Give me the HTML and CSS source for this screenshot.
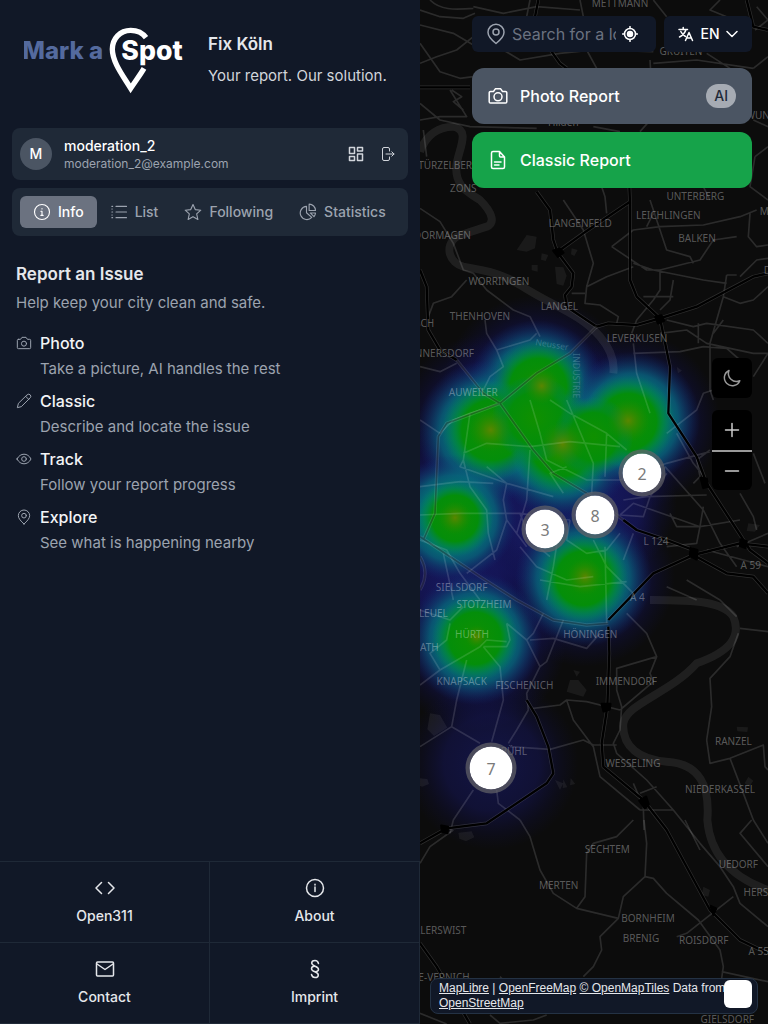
FILE: index.html
```html
<!DOCTYPE html>
<html lang="en">
<head>
<meta charset="utf-8">
<meta name="viewport" content="width=device-width, initial-scale=1">
<title>Fix Köln</title>
<link rel="stylesheet" href="styles.css">
</head>
<body>
<div class="app">
  <aside class="sidebar">
    <header class="brand">
      <svg class="logo" viewBox="72 78 480 204" role="img" aria-label="Mark a Spot">
        <text class="logo-mark" x="67" y="178">Mark a</text>
        <text class="logo-spot" x="364" y="180">Spot</text>
        <path d="M438 113C428 99 411 91 392 91c-32 0-55 25-55 57 0 38 32 79 55 117 13-20 29-41 40-60" fill="none" stroke="#fff" stroke-width="16"/>
      </svg>
      <div class="brand-text">
        <h1>Fix Köln</h1>
        <p>Your report. Our solution.</p>
      </div>
    </header>

    <section class="user card">
      <span class="avatar">M</span>
      <div class="user-text">
        <strong>moderation_2</strong>
        <span>moderation_2@example.com</span>
      </div>
      <button class="icon-btn" aria-label="Dashboard"><svg class="i16" viewBox="0 0 16 16"><path d="M1.5 1.5h5v6h-5zM9.500 1.500h5v3.500h-5zM9.500 8h5v6.500h-5zM1.500 10.500h5v4h-5z"/></svg></button>
      <button class="icon-btn thin" aria-label="Log out"><svg class="i16" viewBox="0 0 16 16"><path d="M9.500 5V3a1.500 1.500 0 0 0-1.500-1.500H4A1.500 1.500 0 0 0 2.500 3v10A1.500 1.500 0 0 0 4 14.500h4A1.500 1.500 0 0 0 9.500 13v-2M6 8h8M11.800 5.800 14 8l-2.200 2.200"/></svg></button>
    </section>

    <nav class="tabs card" aria-label="Sections">
      <button class="tab active"><svg class="i18" viewBox="0 0 24 24"><circle cx="12" cy="12" r="10"/><path d="M10.500 11h1.500v5.500M10.500 16.500h3M12 7.300v.6"/></svg>Info</button>
      <button class="tab"><svg class="i18" viewBox="0 0 24 24"><path d="M8 4.500h14M8 12h14M8 19.500h14M2.500 4.500h1M2.500 12h1M2.500 19.500h1M2.500 8h.5M2.500 16h.5"/></svg>List</button>
      <button class="tab"><svg class="i18" viewBox="0 0 24 24"><path d="m12 2 3 6.800 7.400.8-5.500 5 1.600 7.400-6.500-3.800L5.500 22l1.600-7.400-5.500-5L9 8.800z"/></svg>Following</button>
      <button class="tab"><svg class="i18" viewBox="0 0 24 24"><path d="M10 4.500a8.800 8.800 0 1 0 7 14.700l-7-6.200zM13.500 1.500v8.500H22a8.500 8.500 0 0 0-8.500-8.500zM15 13.300h7a9 9 0 0 1-2 5z"/></svg>Statistics</button>
    </nav>

    <main class="intro">
      <h2>Report an Issue</h2>
      <p>Help keep your city clean and safe.</p>
      <dl class="steps">
        <div class="step"><svg class="i16" viewBox="0 0 24 24"><path d="M3.500 6.500h3.300L9 3.500h6l2.200 3h3.300a1.500 1.500 0 0 1 1.500 1.500v11a1.500 1.500 0 0 1-1.500 1.500h-17A1.500 1.500 0 0 1 2 19V8a1.500 1.500 0 0 1 1.500-1.500z"/><circle cx="12" cy="13" r="3.800"/></svg><dt>Photo</dt><dd>Take a picture, AI handles the rest</dd></div>
        <div class="step"><svg class="i16" viewBox="0 0 24 24"><path d="M17 2.500a3.200 3.200 0 0 1 4.500 4.500L8 20.500 2 22l1.500-6zM14.500 5 19 9.500"/></svg><dt>Classic</dt><dd>Describe and locate the issue</dd></div>
        <div class="step"><svg class="i16" viewBox="0 0 24 24"><path d="M1.500 12C4 7 8 4.800 12 4.800S20 7 22.500 12C20 17 16 19.200 12 19.200S4 17 1.500 12z"/><circle cx="12" cy="12" r="3.500"/></svg><dt>Track</dt><dd>Follow your report progress</dd></div>
        <div class="step"><svg class="i16" viewBox="0 0 24 24"><path d="M12 22.500C7 18 3.500 14 3.500 10a8.500 8.500 0 0 1 17 0c0 4-3.500 8-8.500 12.500z"/><circle cx="12" cy="10" r="3.500"/></svg><dt>Explore</dt><dd>See what is happening nearby</dd></div>
      </dl>
    </main>

    <nav class="links" aria-label="More">
      <a href="#open311"><svg class="i20" viewBox="0 0 20 20"><path d="M6.500 4.500 1 10l5.500 5.500M13.500 4.500 19 10l-5.500 5.500"/></svg>Open311</a>
      <a href="#about"><svg class="i20" viewBox="0 0 20 20"><circle cx="10" cy="10" r="8.500"/><path d="M10 9v4.500M10 6.300v.6"/></svg>About</a>
      <a href="#contact"><svg class="i20" viewBox="0 0 20 20"><rect x="1.500" y="3" width="17" height="14" rx="1"/><path d="m2 5 8 5.500L18 5"/></svg>Contact</a>
      <a href="#imprint"><svg class="i20" viewBox="0 0 20 20"><path d="M13.500 4.500C13 2.500 11.800 1.500 10 1.500c-2 0-3.300 1-3.300 2.600C6.700 7.500 13.500 7 13.500 10.300c0 1.600-1.500 2.400-3.300 2.400M6.500 15.500c.5 2 1.700 3 3.500 3 2 0 3.300-1 3.300-2.600C13.300 12.500 6.500 13 6.500 9.700c0-1.600 1.500-2.400 3.300-2.400"/></svg>Imprint</a>
    </nav>
  </aside>

  <section class="map" aria-label="Map">
    <svg class="map-canvas" viewBox="0 0 1044 3072" preserveAspectRatio="xMidYMid slice">
      <defs>
        <radialGradient id="blue"><stop offset="0" stop-color="#16195e"/><stop offset=".55" stop-color="#15165a" stop-opacity=".75"/><stop offset=".8" stop-color="#111150" stop-opacity=".3"/><stop offset="1" stop-color="#101048" stop-opacity="0"/></radialGradient>
        <radialGradient id="teal"><stop offset=".45" stop-color="#007c72"/><stop offset=".68" stop-color="#066a7c" stop-opacity=".75"/><stop offset=".85" stop-color="#0d4a76" stop-opacity=".35"/><stop offset="1" stop-color="#102a70" stop-opacity="0"/></radialGradient>
        <radialGradient id="green"><stop offset="0" stop-color="#109000"/><stop offset=".6" stop-color="#048e0a"/><stop offset="1" stop-color="#008060" stop-opacity="0"/></radialGradient>
        <radialGradient id="olive"><stop offset="0" stop-color="#5a8600"/><stop offset="1" stop-color="#208c00" stop-opacity="0"/></radialGradient>
      </defs>

      <g class="heat">
        <g fill="url(#blue)">
          <circle cx="350" cy="1170" r="285"/><circle cx="210" cy="1290" r="290"/><circle cx="425" cy="1330" r="300"/><circle cx="630" cy="1265" r="270"/><circle cx="100" cy="1555" r="290"/><circle cx="495" cy="1730" r="270"/><circle cx="170" cy="1920" r="270"/><circle cx="330" cy="1590" r="260"/><circle cx="540" cy="1510" r="230"/><circle cx="120" cy="1760" r="220"/>
          <circle cx="215" cy="2290" r="260" opacity=".7"/>
        </g>
        <g fill="url(#teal)">
          <circle cx="350" cy="1165" r="205"/><circle cx="205" cy="1295" r="215"/><circle cx="425" cy="1345" r="215"/><circle cx="635" cy="1260" r="205"/><circle cx="100" cy="1555" r="190"/><circle cx="490" cy="1735" r="205"/><circle cx="165" cy="1915" r="200"/>
        </g>
        <g fill="url(#green)">
          <circle cx="355" cy="1160" r="140"/><circle cx="215" cy="1290" r="150"/><circle cx="425" cy="1335" r="155"/><circle cx="345" cy="1255" r="130"/><circle cx="625" cy="1265" r="140"/><circle cx="520" cy="1310" r="120"/><circle cx="105" cy="1555" r="115"/><circle cx="490" cy="1735" r="135"/><circle cx="165" cy="1915" r="130"/>
        </g>
        <g fill="url(#olive)">
          <circle cx="365" cy="1158" r="55"/><circle cx="212" cy="1290" r="65"/><circle cx="428" cy="1333" r="70"/><circle cx="625" cy="1262" r="65"/><circle cx="105" cy="1553" r="50"/><circle cx="495" cy="1730" r="55"/><circle cx="170" cy="1910" r="35"/>
        </g>
      </g>

      <g class="water">
        <path d="M0 455C20 400 60 380 100 380C150 390 120 440 110 490C100 560 150 580 180 600C220 640 225 670 200 680C170 690 150 695 110 710C70 740 90 790 130 800C220 815 250 825 300 855C400 920 480 940 540 1010C570 1045 585 1080 580 1120M690 1800C830 1800 910 1805 940 1850C965 1910 930 1955 830 1990C750 2080 620 2110 610 2170C605 2240 660 2280 740 2285C840 2290 870 2360 862 2460C870 2560 930 2630 1044 2670"/>
      </g>
      <g class="patch">
        <path d="M320 705l30 5-5 35-25 10-30-5zM365 760l20 5-8 18-14-4zM405 800l25 2 10 25-10 30-20-5zM335 795l18 0 0 20-18-4zM455 745l18 5-10 18-10-5zM30 2140l30 5 22 38-40 25-20-20zM450 2040l25 0 25 30-10 20-50-15zM460 2010l20 5-10 15zM115 2498l40-4 8 18-25 12-20-8zM405 2340l25 10-10 20zM430 2338l12 24-14 2zM452 2334l14 18-16 4zM0 2335l22 2 5 15-20 8-7-2zM950 2180l34 2-2 14-30-2zM985 1570l35 5-15 20-25-2zM850 2660l20 10-5 20-20-5zM985 2330l15 12-12 18-14-10zM770 1100l16 12-12 8z"/>
      </g>

      <g class="roads">
        <path d="M0 30L60 50L130 55L165 40M0 75L100 100L160 135M30 0C60 30 100 30 160 25M0 190L50 170L110 150L160 110M0 130L60 215L120 235L160 230M90 270L140 350L60 350L0 360M0 310L60 360L150 380L350 385M95 270L125 290L100 305L130 330M10 390L20 470M250 150L300 180L420 160L520 150L700 155M160 20L250 40L350 20L480 30M480 0L490 50M500 150L530 205M860 160L930 205M700 190L830 180L1000 205M660 395L700 350L690 180M520 380L600 395M1000 205L1044 170M1000 360L1044 380M1005 470L1044 440M1005 470L990 560L1044 600M850 560L870 600M330 0L320 50M700 0L740 50M900 0L870 30L920 50M1010 20L1044 60L1005 90"/>
        <path d="M0 625L60 665L100 730L130 810L160 820L200 870L280 930L330 950L360 1010M140 840L95 890L40 910L25 950M195 960L200 1000L230 1050L250 1100L210 1130L190 1170M230 1050L330 1020L350 1000M430 600L490 690L520 790L500 860L495 910L540 915L595 950L590 970M545 560L555 590L560 640M455 880H495M500 860L560 830L640 800M575 740L640 690L720 680L850 675L960 650L1010 630M640 790L700 810L850 840L920 850M575 740L680 810L720 810L840 780L880 720L950 710M690 600L720 690L740 750L810 770L820 790M720 810L720 870L700 900L650 960L635 1000M760 840L750 900L720 930M920 825L910 890L960 910L1000 900L1044 860M960 830L1010 780L1044 775M950 825L920 825M670 890H760M740 960L820 980L860 970L1000 990L1044 1030M720 1000L800 990L860 1030L1000 1060L1044 1060M835 970V1030M870 1030L870 1170L880 1200M880 1000L910 960M640 1030L650 1120L690 1240M640 1060L780 1055L850 1040L920 1045L960 1080M1000 1130L1044 1060M990 640L985 710L1010 740L1044 735M910 890L870 1030M700 640L680 680"/>
        <path d="M0 1100L60 1115L110 1090M60 1300L100 1260L150 1240L240 1210M150 1240L130 1380L120 1400L260 1450L400 1490M0 1260L60 1300M130 1360L200 1330L330 1340L450 1325L600 1340M200 1400L260 1450L250 1500L260 1560L320 1640M130 1380L150 1460L200 1530L205 1600L225 1680M0 1460L120 1445L220 1450M0 1545L120 1540L300 1540L450 1560M260 1560L230 1650L140 1720M300 1540L330 1620L390 1670M330 1200L360 1300L380 1380L500 1440L600 1440M390 1200L450 1240L560 1300L620 1350M440 1200L520 1390L515 1480M560 1300L555 1430M330 1350L320 1500L290 1600M430 1480L390 1420L440 1400M600 1440L740 1390L870 1355M610 1500L680 1490L860 1485M735 1400L850 1530L900 1630L950 1700M740 1420L690 1490L670 1550L600 1545M600 1545L640 1510L740 1545L840 1580L960 1560M750 1540L770 1580L840 1580L830 1630L740 1640M640 1600L610 1680M840 1580L850 1520M1000 1360L1035 1450M820 1450L840 1430L830 1380L870 1350M960 1480L1000 1550L1010 1590M770 1300L820 1390L860 1440M740 1300L830 1230L850 1180L880 1170M950 1640L1044 1600M740 1760L830 1800M800 1740L850 1770L900 1800L950 1850M860 1650L1044 1700M0 1620L80 1650L120 1720L180 1800M300 1640L350 1700L440 1740L520 1730M520 1620L560 1700L640 1780M450 1560L440 1620L500 1660L560 1650L600 1600M425 1540L400 1700L380 1800M70 1660L100 1800M555 1640L560 1870M360 1740L480 1760L620 1745"/>
        <path d="M0 1830L90 1860L130 1820M260 1870L320 1920L360 2000L380 1985L430 1860M90 1870L80 1920L30 1960L60 2010L180 1940L200 1920L260 1925M260 1870L270 1920L260 1940L190 1940M0 2055L60 2010M190 1940L240 2000L250 2100L215 2225M140 1980L110 2100L95 2180L0 2240M95 2180L180 2230M330 1920L400 1915L500 1945L540 1900M370 1840L340 1900L320 1920M360 2000L320 2080L325 2130L290 2190L265 2230M340 2125L420 2115L440 2100L500 2105L600 2130M440 2100L460 2160L520 2240L540 2330L660 2430M620 1840L680 1900L710 1970L690 2020L700 2045L600 2130M710 1970L590 2005L590 2070L605 2120L600 2190L580 2230L590 2260L680 2340L760 2430M270 2240L390 2248L490 2220L520 2235L590 2235M160 2370L100 2460L90 2500M230 2370L235 2410L300 2460M960 1885L1044 1895M955 1900L930 1970L870 2035L875 2120L860 2220L870 2290L930 2275L1030 2235L1035 2300L1044 2310M930 2275L970 2380L1000 2460M660 2380L710 2360M660 2430H760L840 2530L900 2600L940 2660L960 2710L1044 2780M640 2350L670 2420L672 2490"/>
        <path d="M300 2460L330 2510L360 2610L400 2680L470 2725L595 2755M640 2460L590 2510L520 2530L500 2560L495 2690L470 2725M672 2460L680 2530L675 2630L610 2690L595 2755L540 2810L545 2850L520 2900L490 2930M675 2630L700 2635L740 2680L835 2760L900 2850L910 2900L905 2935M770 2810L800 2800L940 2690M905 2915L1044 2945M795 2460L840 2550M995 2460L960 2500L1044 2600M1000 2460L1044 2530M0 2590L30 2540L100 2490M240 2930L250 2940M210 3045L240 3070L340 3060L380 3045M0 3040L80 3072"/>
      </g>

      <g class="highway-edge">
        <path d="M355 0L345 50L370 120L420 190L440 205M980 0L1000 80L1044 90M0 262L150 262M350 575L390 630L400 720L412 756L460 820L455 860L435 885L440 920L530 980L565 970L650 975L720 955L830 920L1000 830L1044 820M412 756L490 700L630 605L628 560M630 605V840L650 890L720 955L750 1100L745 1240L830 1370L860 1450L990 1650L1044 1690M0 810L20 860L25 990L60 1050L110 1080M610 1560L650 1590L740 1620L820 1650M565 1860L700 1720L820 1665L960 1630L1044 1640M820 1665L920 1720L1000 1730L1044 1780M565 1880L568 1960L562 2120L545 2230L550 2300L670 2400L740 2490L870 2730L960 2820L1044 2860M320 2100L350 2150L385 2240L400 2320L380 2350L260 2430L200 2470L80 2485L0 2530M0 2830L50 2900L150 3072"/>
      </g>
      <g class="highway">
        <path d="M355 0L345 50L370 120L420 190L440 205M980 0L1000 80L1044 90M0 262L150 262M350 575L390 630L400 720L412 756L460 820L455 860L435 885L440 920L530 980L565 970L650 975L720 955L830 920L1000 830L1044 820M412 756L490 700L630 605L628 560M630 605V840L650 890L720 955L750 1100L745 1240L830 1370L860 1450L990 1650L1044 1690M0 810L20 860L25 990L60 1050L110 1080M610 1560L650 1590L740 1620L820 1650M565 1860L700 1720L820 1665L960 1630L1044 1640M820 1665L920 1720L1000 1730L1044 1780M565 1880L568 1960L562 2120L545 2230L550 2300L670 2400L740 2490L870 2730L960 2820L1044 2860M320 2100L350 2150L385 2240L400 2320L380 2350L260 2430L200 2470L80 2485L0 2530M0 2830L50 2900L150 3072"/>
        <path class="junction" d="M400 752l20-6 10 12-16 12zM706 950l18-4 8 16-18 8zM812 1644l20 6-2 28-20-10zM962 1618l18 6-4 20-16-6zM545 2112h26l-2 16-18 6zM658 2402l20-12 8 24-12 10zM64 2477l20 4-2 18-16-4zM872 2718l16 8-8 18zM842 1434l18 2 4 24-14 4z"/>
      </g>
      <g class="motorway-faint">
        <path class="casing" d="M530 980L450 1060L350 1120L240 1210L80 1270L55 1310L45 1540L10 1620M110 1080L190 1180L240 1210L340 1350L400 1420L500 1480L610 1560M0 1610L60 1650L180 1730L290 1800L400 1860L500 1875L565 1870M0 1670Q30 1720 0 1770"/>
        <path class="core" d="M530 980L450 1060L350 1120L240 1210L80 1270L55 1310L45 1540L10 1620M110 1080L190 1180L240 1210L340 1350L400 1420L500 1480L610 1560M0 1610L60 1650L180 1730L290 1800L400 1860L500 1875L565 1870M0 1670Q30 1720 0 1770"/>
      </g>

      <g class="labels">
        <text x="600" y="21">METTMANN</text><text x="783" y="165">GRUITEN</text><text x="430" y="377">Hilden</text><text x="78" y="506">STÜRZELBERG</text><text x="130" y="575">ZONS</text><text x="826" y="600">UNTERBERG</text><text x="1044" y="357">WUNGEN</text>
        <text x="745" y="656">LEICHLINGEN</text><text x="481" y="680">LANGENFELD</text><text x="831" y="725">BALKEN</text><text x="67" y="716">DORMAGEN</text><text x="1033" y="645">M</text><text x="1042" y="822">D</text><text x="237" y="854">WORRINGEN</text><text x="418" y="930">LANGEL</text><text x="180" y="960">THENHOVEN</text><text x="14" y="980">SCH</text><text x="651" y="1025">LEVERKUSEN</text><text x="68" y="1070">INNERSDORF</text><text x="160" y="1187">AUWEILER</text>
        <text class="street" transform="translate(345 1035) rotate(9)">Neusser</text><text class="street" transform="translate(458 1060) rotate(90)">INDUSTRIE</text>
        <text x="708" y="1634">L 124</text><text x="992" y="1706">A 59</text><text x="125" y="1774">SIELSDORF</text><text x="652" y="1802">A 4</text><text x="192" y="1824">STOTZHEIM</text><text x="40" y="1850">LEUEL</text><text x="156" y="1915">HÜRTH</text><text x="28" y="1952">ATH</text><text x="511" y="1915">HÖNINGEN</text><text x="125" y="2056">KNAPSACK</text><text x="313" y="2068">FISCHENICH</text><text x="619" y="2056">IMMENDORF</text><text x="272" y="2266">BRÜHL</text>
        <text x="940" y="2235">RANZEL</text><text x="639" y="2300">WESSELING</text><text x="900" y="2378">NIEDERKASSEL</text><text x="562" y="2560">SECHTEM</text><text x="955" y="2604">UEDORF</text><text x="416" y="2666">MERTEN</text><text x="1024" y="2688">HERSEL</text><text x="684" y="2766">BORNHEIM</text><text x="663" y="2827">BRENIG</text><text x="851" y="2833">ROISDORF</text><text x="1025" y="2866">A 555</text><text x="62" y="2803">LLERSWIST</text><text x="72" y="2942">E-VERNICH</text><text x="922" y="3070">GIELSDORF</text>
      </g>
    </svg>

    <button class="cluster c2">2</button>
    <button class="cluster c8">8</button>
    <button class="cluster c3">3</button>
    <button class="cluster big c7">7</button>

    <div class="actions">
      <div class="search-row">
        <div class="search">
          <svg class="i24" viewBox="0 0 24 24"><path d="M12 21.500C7.500 18 4 14 4 10.300a8 8 0 0 1 16 0C20 14 16.500 18 12 21.500z"/><circle cx="12" cy="10" r="3"/></svg>
          <input type="text" placeholder="Search for a location" aria-label="Search for a location">
          <button class="locate" aria-label="Use my location"><svg class="i16" viewBox="0 0 16 16"><circle cx="8" cy="8" r="5.500"/><circle cx="8" cy="8" r="2.500" fill="currentColor"/><path d="M8 .5v2M8 13.500v2M.5 8h2M13.500 8h2"/></svg></button>
        </div>
        <button class="lang"><svg class="i16" viewBox="0 0 16 16"><path d="M1 3.500h8.500M5.200 1.500v2M8 3.500C7 7 4.500 9.500 1.500 11M2.800 5.500c1 2 2.700 4 4.700 5M7.500 14.500 11 6.500l3.500 8M8.700 12h4.600"/></svg>EN<svg class="i12" viewBox="0 0 12 12"><path d="m1 3.500 5 5 5-5"/></svg></button>
      </div>
      <button class="action photo"><svg class="i20" viewBox="0 0 20 20"><path d="M2.500 5.500h3l1.800-2.700h5.400l1.800 2.700h3A1.300 1.300 0 0 1 18.800 6.800v9a1.300 1.300 0 0 1-1.300 1.300h-15a1.300 1.300 0 0 1-1.300-1.300v-9A1.300 1.300 0 0 1 2.500 5.500z"/><circle cx="10" cy="10.800" r="4"/></svg>Photo Report<span class="badge">AI</span></button>
      <button class="action classic"><svg class="i20" viewBox="0 0 20 20"><path d="M11.500 1.500H5A1.500 1.500 0 0 0 3.500 3v14A1.500 1.500 0 0 0 5 18.500h10a1.500 1.500 0 0 0 1.500-1.500V7zM11.500 1.500V6a1 1 0 0 0 1 1h4M6.500 12H13M6.500 15h4.500"/></svg>Classic Report</button>
    </div>

    <div class="controls">
      <button class="theme" aria-label="Dark mode"><svg class="i20" viewBox="0 0 20 20"><path d="M7 2.500a8 8 0 1 0 10.800 10.200A8 8 0 0 1 7 2.500z"/></svg></button>
      <div class="zoom">
        <button aria-label="Zoom in"><svg class="i20" viewBox="0 0 20 20"><path d="M10 3.500v13M3.500 10h13"/></svg></button>
        <button aria-label="Zoom out"><svg class="i20" viewBox="0 0 20 20"><path d="M3.500 10h13"/></svg></button>
      </div>
    </div>

    <div class="attribution"><a href="#maplibre">MapLibre</a> | <a href="#openfreemap">OpenFreeMap</a> <a href="#openmaptiles">© OpenMapTiles</a> Data from <a href="#osm">OpenStreetMap</a></div>
    <button class="attribution-toggle" aria-label="Toggle attribution"></button>
  </section>
</div>
</body>
</html>
```
FILE: styles.css
```css
* { box-sizing: border-box; }
body { margin: 0; font-family: Inter, sans-serif; font-size: 15px; line-height: 24px; color: #e5e7eb; background: #0c0c0c; }
h1, h2, p, dl, dd { margin: 0; }
button, input { font: inherit; color: inherit; border: 0; background: none; padding: 0; }
button { cursor: pointer; }
a { color: inherit; }

svg { flex: none; }
.i12, .i16, .i18, .i20, .i24 { fill: none; stroke: currentColor; stroke-width: 1.500; stroke-linecap: round; stroke-linejoin: round; }
.i12 { width: 12px; height: 12px; }
.i16 { width: 16px; height: 16px; }
.i18 { width: 18px; height: 18px; }
.i20 { width: 20px; height: 20px; }
.i24 { width: 24px; height: 24px; }

.app { display: grid; grid-template-columns: minmax(320px, 420px) minmax(0, 1fr); min-height: 100vh; }

.sidebar { display: flex; flex-direction: column; background: #111827; }
.brand { display: flex; align-items: center; gap: 24px; padding: 16px 16px 16px 24px; min-height: 120px; }
.logo { width: 160px; height: 68px; flex: none; }
.logo text { font-family: Inter, sans-serif; font-weight: 800; }
.logo-mark { fill: #546a9e; font-size: 72px; }
.logo-spot { fill: #fff; font-size: 80px; }
.brand-text { display: grid; gap: 8px; }
.brand h1, .intro h2 { font-size: 17px; line-height: 24px; font-weight: 600; }
.brand p { color: #d1d5db; }

.card { margin: 8px 12px 0; padding: 8px; border-radius: 8px; background: #1f2937; }
.user { display: flex; align-items: center; gap: 16px; padding-right: 12px; }
.avatar { display: grid; place-items: center; width: 32px; height: 32px; border-radius: 50%; background: #4b5563; color: #fff; font-size: 14px; font-weight: 500; }
.user-text { display: grid; flex: 1; margin-left: -4px; }
.user-text strong { font-size: 14px; line-height: 20px; font-weight: 500; color: #fff; }
.user-text span { font-size: 12px; line-height: 16px; color: #9ca3af; }
.icon-btn { display: flex; color: #d1d5db; }
.icon-btn.thin svg { stroke-width: 1; }

.tabs { display: flex; }
.tab { display: flex; align-items: center; gap: 7px; height: 32px; padding: 0 13px; border-radius: 6px; font-size: 14px; font-weight: 500; color: #9ca3af; }
.tab.active { background: #6b7280; color: #fff; }

.intro { flex: 1; padding: 26px 16px; }
.intro h2 { margin-bottom: 5px; }
.intro > p { color: #9ca3af; margin-bottom: 15px; }
.steps { display: grid; gap: 6px; }
.step { display: grid; grid-template-columns: 16px 1fr; column-gap: 8px; align-items: center; line-height: 26px; color: #9ca3af; }
.step dt { font-size: 16px; font-weight: 500; color: #f3f4f6; }
.step dd { grid-column: 2; }

.links { display: grid; grid-template-columns: 1fr 1fr; border-bottom: 1px solid #1f2937; }
.links a { display: flex; flex-direction: column; align-items: center; gap: 8px; padding: 16px 0; border-top: 1px solid #1f2937; border-right: 1px solid #1f2937; font-size: 14px; line-height: 20px; font-weight: 500; text-decoration: none; }

.map { position: relative; overflow: hidden; background: #0c0c0c; }
.map-canvas { position: absolute; inset: 0; width: 100%; height: 100%; }
.water path { fill: none; stroke: #fff; stroke-opacity: .08; stroke-width: 24; }
.patch { fill: #fff; fill-opacity: .06; }
.roads path { fill: none; stroke: #fff; stroke-opacity: .13; stroke-width: 5; stroke-linejoin: round; }
.highway-edge path { fill: none; stroke: #fff; stroke-width: 11; stroke-opacity: .14; stroke-linejoin: round; }
.highway path { fill: none; stroke: #000; stroke-width: 7; stroke-linejoin: round; }
.highway .junction { fill: #000; }
.motorway-faint path { fill: none; stroke-linejoin: round; }
.motorway-faint .casing { stroke: #fff; stroke-opacity: .12; stroke-width: 10; }
.motorway-faint .core { stroke: #000; stroke-opacity: .3; stroke-width: 5; }
.labels text { font-family: "Noto Sans", sans-serif; font-size: 30px; fill: #fff; fill-opacity: .33; text-anchor: middle; }
.labels .street { font-size: 26px; text-anchor: start; fill: #7ab; fill-opacity: .4; }

.cluster { position: absolute; width: 47px; height: 47px; border: 4px solid rgba(100, 100, 104, .7); border-radius: 50%; background: #fff; background-clip: padding-box; color: #7a7a7a; font-family: "Noto Sans", sans-serif; font-size: 16px; transform: translate(-50%, -50%); }
.cluster.big { width: 51px; height: 51px; }
.c2 { left: 222px; top: 473px; }
.c8 { left: 175px; top: 515px; }
.c3 { left: 125px; top: 529px; }
.c7 { left: 71px; top: 768px; }

.actions { position: absolute; top: 16px; right: 16px; width: 280px; display: grid; grid-template-columns: minmax(0, 1fr); gap: 8px; }
.search-row { display: flex; gap: 8px; margin-bottom: 8px; }
.search, .lang { display: flex; align-items: center; height: 36px; border-radius: 6px; background: #111827; }
.search { flex: 1; min-width: 0; padding: 0 18px 0 12px; color: #9ca3af; }
.search input { flex: 1; width: 0; min-width: 0; margin: 0 6px 0 4px; outline: 0; font-size: 16px; }
.search input::placeholder { color: #6b7280; opacity: 1; }
.locate { display: flex; color: #fff; }
.lang { width: 88px; justify-content: center; gap: 6px; font-size: 14px; font-weight: 500; color: #fff; }
.action { display: flex; align-items: center; gap: 12px; height: 56px; padding: 0 16px; border-radius: 12px; font-size: 16px; font-weight: 500; color: #fff; }
.photo { background: #4b5563; }
.classic { background: #16a34a; }
.badge { margin-left: auto; padding: 0 8px; border-radius: 12px; background: #a6abb3; color: #1f2937; font-size: 14px; line-height: 24px; }

.controls { position: absolute; top: 358px; right: 16px; display: grid; gap: 12px; color: #ccc; }
.controls button { display: grid; place-items: center; width: 40px; height: 40px; }
.theme, .zoom { border-radius: 6px; background: #000; }
.theme { color: #999; }
.zoom button + button { border-top: 2px solid #999; }

.attribution { position: absolute; left: 10px; right: 10px; bottom: 10px; padding: 2px 8px; border: 1px solid #243244; border-radius: 8px; background: #111827; font: 12px/15px "Liberation Sans", Arial, sans-serif; color: #e5e7eb; }
.attribution-toggle { position: absolute; right: 16px; bottom: 16px; width: 28px; height: 28px; border-radius: 6px; background: #fff; }
```
